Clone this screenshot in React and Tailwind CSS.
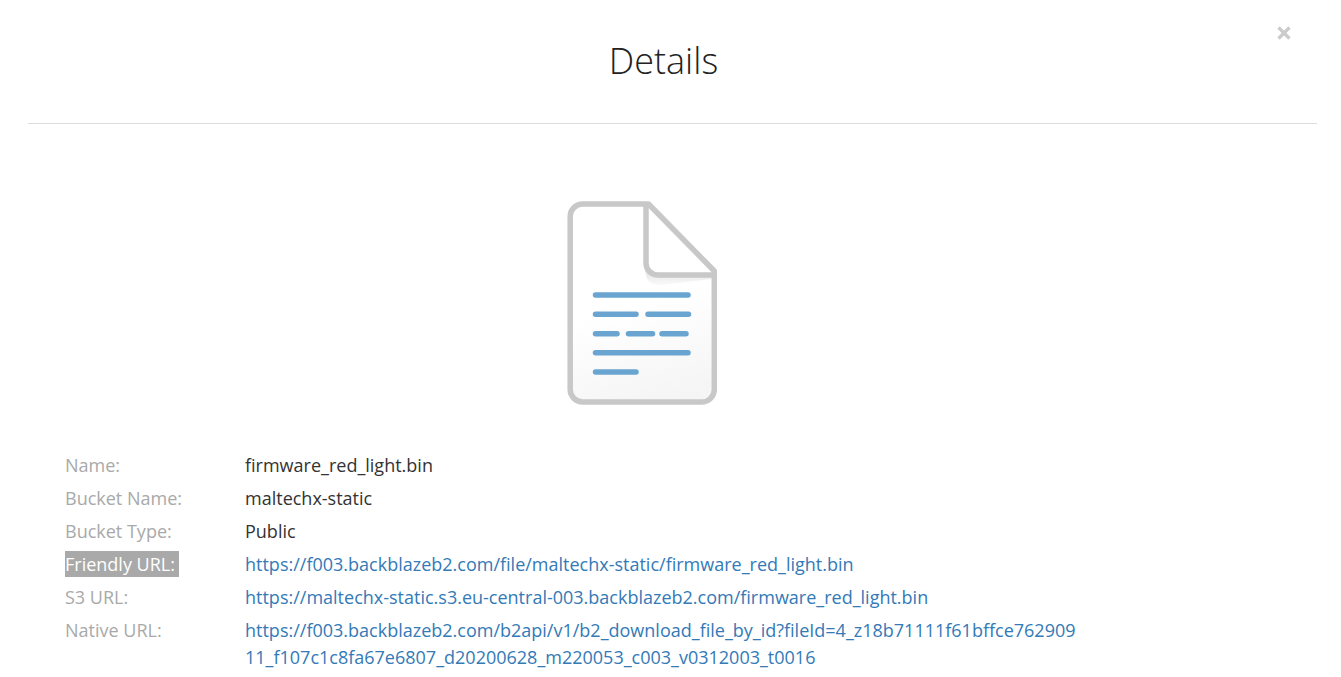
const details = [
  { label: 'Name:', value: 'firmware_red_light.bin' },
  { label: 'Bucket Name:', value: 'maltechx-static' },
  { label: 'Bucket Type:', value: 'Public' },
  {
    label: 'Friendly URL:',
    value: 'https://f003.backblazeb2.com/file/maltechx-static/firmware_red_light.bin',
    link: true,
    selected: true,
  },
  {
    label: 'S3 URL:',
    value: 'https://maltechx-static.s3.eu-central-003.backblazeb2.com/firmware_red_light.bin',
    link: true,
  },
  {
    label: 'Native URL:',
    value:
      'https://f003.backblazeb2.com/b2api/v1/b2_download_file_by_id?fileId=4_z18b71111f61bffce76290911_f107c1c8fa67e6807_d20200628_m220053_c003_v0312003_t0016',
    link: true,
  },
]

const FileIcon = () => (
  <svg width="150" height="204" viewBox="0 0 150 204" fill="none" aria-hidden="true">
    <defs>
      <linearGradient id="paper" x1="0.4" y1="0" x2="0.6" y2="1">
        <stop offset="0.5" stopColor="#ffffff" />
        <stop offset="1" stopColor="#f5f5f5" />
      </linearGradient>
      <linearGradient id="shade" x1="0" y1="0" x2="0" y2="1">
        <stop offset="0" stopColor="#dedede" />
        <stop offset="1" stopColor="#fafafa" />
      </linearGradient>
    </defs>
    <path
      d="M15.5 3H81.5L147.3 70V188.5a12.5 12.5 0 0 1-12.5 12.5H15.5A12.5 12.5 0 0 1 3.2 188.5V15.5A12.5 12.5 0 0 1 15.5 3Z"
      fill="url(#paper)"
    />
    {/* shadow under the folded corner */}
    <path d="M78 66c0 12 4 19 16 18l51-6v-4H90Z" fill="url(#shade)" />
    <path d="M81.5 3 147.3 70.5V74H91a12 12 0 0 1-12-12V3Z" fill="#fff" />
    <g stroke="#c8c8c8" strokeWidth="5.5" strokeLinejoin="round">
      <path d="M15.5 3H81.5L147.3 70V188.5a12.5 12.5 0 0 1-12.5 12.5H15.5A12.5 12.5 0 0 1 3.2 188.5V15.5A12.5 12.5 0 0 1 15.5 3Z" />
      <path d="M79 4V62a12 12 0 0 0 12 12H146" />
    </g>
    <path
      d="M28.5 94H121M28.5 113.3H69M81 113.3H121.5M28.5 132.7H50M61.5 132.7H85.5M95 132.7H119M28.5 151.7H121M28.5 171H69"
      stroke="#69a5d0"
      strokeWidth="5.5"
      strokeLinecap="round"
    />
  </svg>
)

const CloseIcon = () => (
  <svg width="14" height="14" viewBox="0 0 14 14" aria-hidden="true">
    <path d="M1.5 1.5 12.5 12.5M12.5 1.5 1.5 12.5" stroke="#cbcbcb" strokeWidth="3.4" />
  </svg>
)

const App = () => {
  return (
    <main className="relative bg-white pl-7 pr-6 pb-1.5 font-['Open_Sans',sans-serif] text-lg leading-[27px] text-[#333]">
      <button type="button" aria-label="Close" className="absolute top-[26px] right-[50px]">
        <CloseIcon />
      </button>

      <header className="border-b border-[#dcdcdc] pt-[37px] pr-[18px] pb-[38px] text-center">
        <h1 className="text-4xl leading-[48px] font-light text-[#222]">Details</h1>
      </header>

      <div className="flex justify-center pt-[77px] pr-[62px] pb-[47px]">
        <FileIcon />
      </div>

      <dl className="flex flex-col gap-1.5 pl-[37px]">
        {details.map((item) => (
          <div key={item.label} className="flex">
            <dt className="w-[180px] shrink-0 text-[#a9a9a9]">
              {item.selected ? (
                <span className="bg-[#a9a9a9] py-px pr-1 text-white">{item.label}</span>
              ) : (
                item.label
              )}
            </dt>
            <dd className="max-w-[840px] min-w-0 break-all">
              {item.link ? (
                <a href={item.value} className="text-[#337ab7]">
                  {item.value}
                </a>
              ) : (
                item.value
              )}
            </dd>
          </div>
        ))}
      </dl>
    </main>
  )
}

export default App
